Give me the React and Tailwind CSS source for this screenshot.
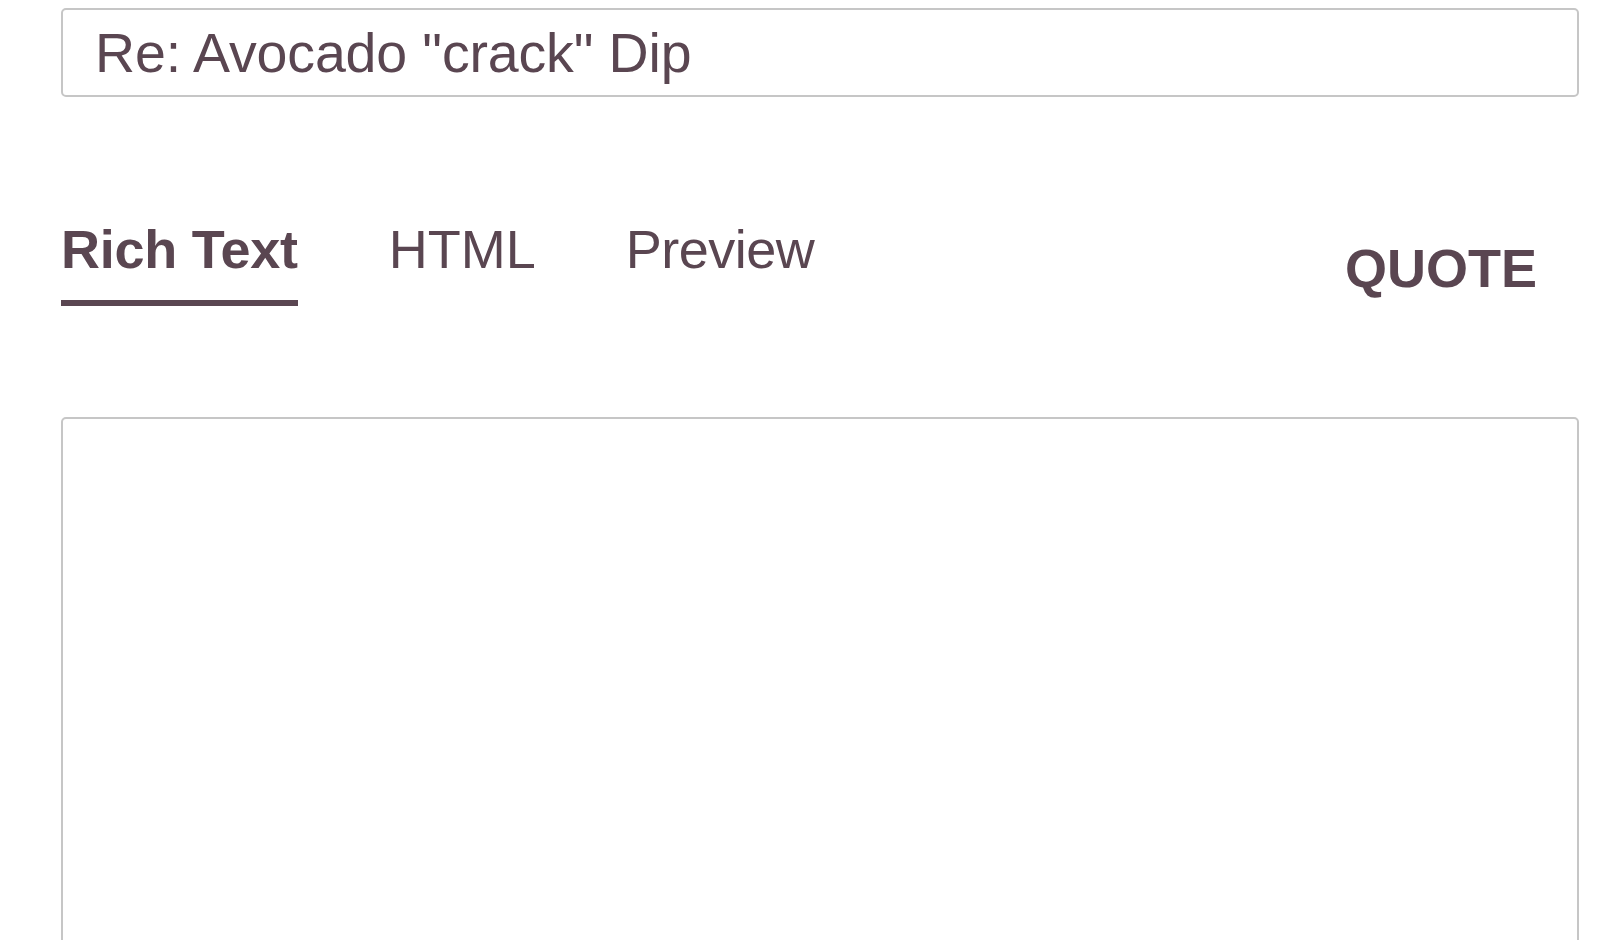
import React from "react";

export default function App() {
  const font = { fontFamily: '"Liberation Sans", Arial, Helvetica, sans-serif' };
  return (
    <div className="min-h-screen bg-white overflow-hidden" style={font}>
      <div className="ml-[61px] w-[1518px] pt-[8px]">
        <div className="h-[89px] border-2 border-[#c6c6c6] rounded-[5px] flex items-center pl-[32px]">
          <span className="text-[55.5px] leading-[56px] text-[#5a4651] tracking-[-0.15px]">Re: Avocado "crack" Dip</span>
        </div>
        <div className="mt-[121px] flex items-start justify-between">
          <div className="flex">
            <div className="text-[54px] leading-[62px] font-bold text-[#5a4651] pb-[20px] border-b-[6px] border-[#5a4651] tracking-[-0.25px]">
              Rich Text
            </div>
            <div className="ml-[91px] text-[54px] leading-[62px] text-[#5a4651] pb-[20px]">HTML</div>
            <div className="ml-[90px] text-[54px] leading-[62px] text-[#5a4651] pb-[20px] tracking-[-0.5px]">Preview</div>
          </div>
          <div className="mt-[19px] mr-[42px] text-[54px] leading-[62px] font-bold text-[#5a4651]">QUOTE</div>
        </div>
        <div className="mt-[111px] h-[600px] border-2 border-[#c6c6c6] rounded-[5px]"></div>
      </div>
    </div>
  );
}
